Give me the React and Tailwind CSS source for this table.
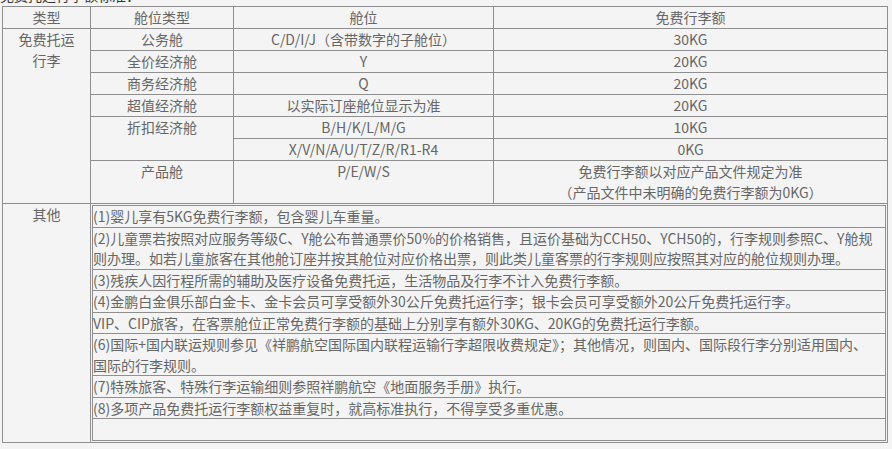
import React from "react";

const cabins = [
  { type: "公务舱", codes: "C/D/I/J（含带数字的子舱位）", allow: "30KG" },
  { type: "全价经济舱", codes: "Y", allow: "20KG" },
  { type: "商务经济舱", codes: "Q", allow: "20KG" },
  { type: "超值经济舱", codes: "以实际订座舱位显示为准", allow: "20KG" },
];

const notes = [
  ["(1)婴儿享有5KG免费行李额，包含婴儿车重量。"],
  [
    "(2)儿童票若按照对应服务等级C、Y舱公布普通票价50%的价格销售，且运价基础为CCH50、YCH50的，行李规则参照C、Y舱规",
    "则办理。如若儿童旅客在其他舱订座并按其舱位对应价格出票，则此类儿童客票的行李规则应按照其对应的舱位规则办理。",
  ],
  ["(3)残疾人因行程所需的辅助及医疗设备免费托运，生活物品及行李不计入免费行李额。"],
  ["(4)金鹏白金俱乐部白金卡、金卡会员可享受额外30公斤免费托运行李；银卡会员可享受额外20公斤免费托运行李。"],
  ["VIP、CIP旅客，在客票舱位正常免费行李额的基础上分别享有额外30KG、20KG的免费托运行李额。"],
  [
    "(6)国际+国内联运规则参见《祥鹏航空国际国内联程运输行李超限收费规定》；其他情况，则国内、国际段行李分别适用国内、",
    "国际的行李规则。",
  ],
  ["(7)特殊旅客、特殊行李运输细则参照祥鹏航空《地面服务手册》执行。"],
  ["(8)多项产品免费托运行李额权益重复时，就高标准执行，不得享受多重优惠。"],
];

// shared cell look for the upper table
const td = "border border-[#8f8f8f] px-[1px] py-0 leading-[21px] text-center align-top";

const App = () => {
  return (
    <div
      className="w-[892px] h-[449px] overflow-hidden bg-[#f4f4f4] text-[14px] text-[#666]"
      style={{ fontFamily: '"Noto Sans CJK SC", "Noto Sans", sans-serif' }}
    >
      <div className="h-[6px] overflow-hidden">
        <div className="mt-[-15px] leading-[21px] text-[#333] whitespace-nowrap">
          免费托运行李额标准：
        </div>
      </div>

      <div className="pl-[2px]">
        <table className="w-[885px] table-fixed border-collapse">
          <colgroup>
            <col className="w-[88px]" />
            <col className="w-[143px]" />
            <col className="w-[260px]" />
            <col className="w-[394px]" />
          </colgroup>
          <tbody>
            <tr>
              <td className={td}>类型</td>
              <td className={td}>舱位类型</td>
              <td className={td}>舱位</td>
              <td className={td}>免费行李额</td>
            </tr>
            {cabins.map((c, i) => (
              <tr key={c.type}>
                {i === 0 && (
                  <td className={td} rowSpan={7}>
                    免费托运
                    <br />
                    行李
                  </td>
                )}
                <td className={td}>{c.type}</td>
                <td className={td}>{c.codes}</td>
                <td className={td}>{c.allow}</td>
              </tr>
            ))}
            <tr>
              <td className={td} rowSpan={2}>
                折扣经济舱
              </td>
              <td className={td}>B/H/K/L/M/G</td>
              <td className={td}>10KG</td>
            </tr>
            <tr>
              <td className={td}>X/V/N/A/U/T/Z/R/R1-R4</td>
              <td className={td}>0KG</td>
            </tr>
            <tr>
              <td className={td}>产品舱</td>
              <td className={td}>P/E/W/S</td>
              <td className={td}>
                免费行李额以对应产品文件规定为准
                <br />
                （产品文件中未明确的免费行李额为0KG）
              </td>
            </tr>
            <tr>
              <td className={td}>其他</td>
              <td colSpan={3} className="border border-[#8f8f8f] p-[1px] align-top">
                <table className="w-full border-collapse border border-[#8f8f8f]">
                  <tbody>
                    {notes.map((lines, i) => (
                      <tr key={i}>
                        <td className="border border-[#8f8f8f] px-0 py-0 leading-[20.5px] text-left whitespace-nowrap">
                          {lines.map((l, j) => (
                            <div key={j}>{l}</div>
                          ))}
                        </td>
                      </tr>
                    ))}
                    <tr>
                      <td className="border border-[#8f8f8f] h-[22px] p-0" />
                    </tr>
                  </tbody>
                </table>
              </td>
            </tr>
          </tbody>
        </table>
      </div>
    </div>
  );
};

export default App;
